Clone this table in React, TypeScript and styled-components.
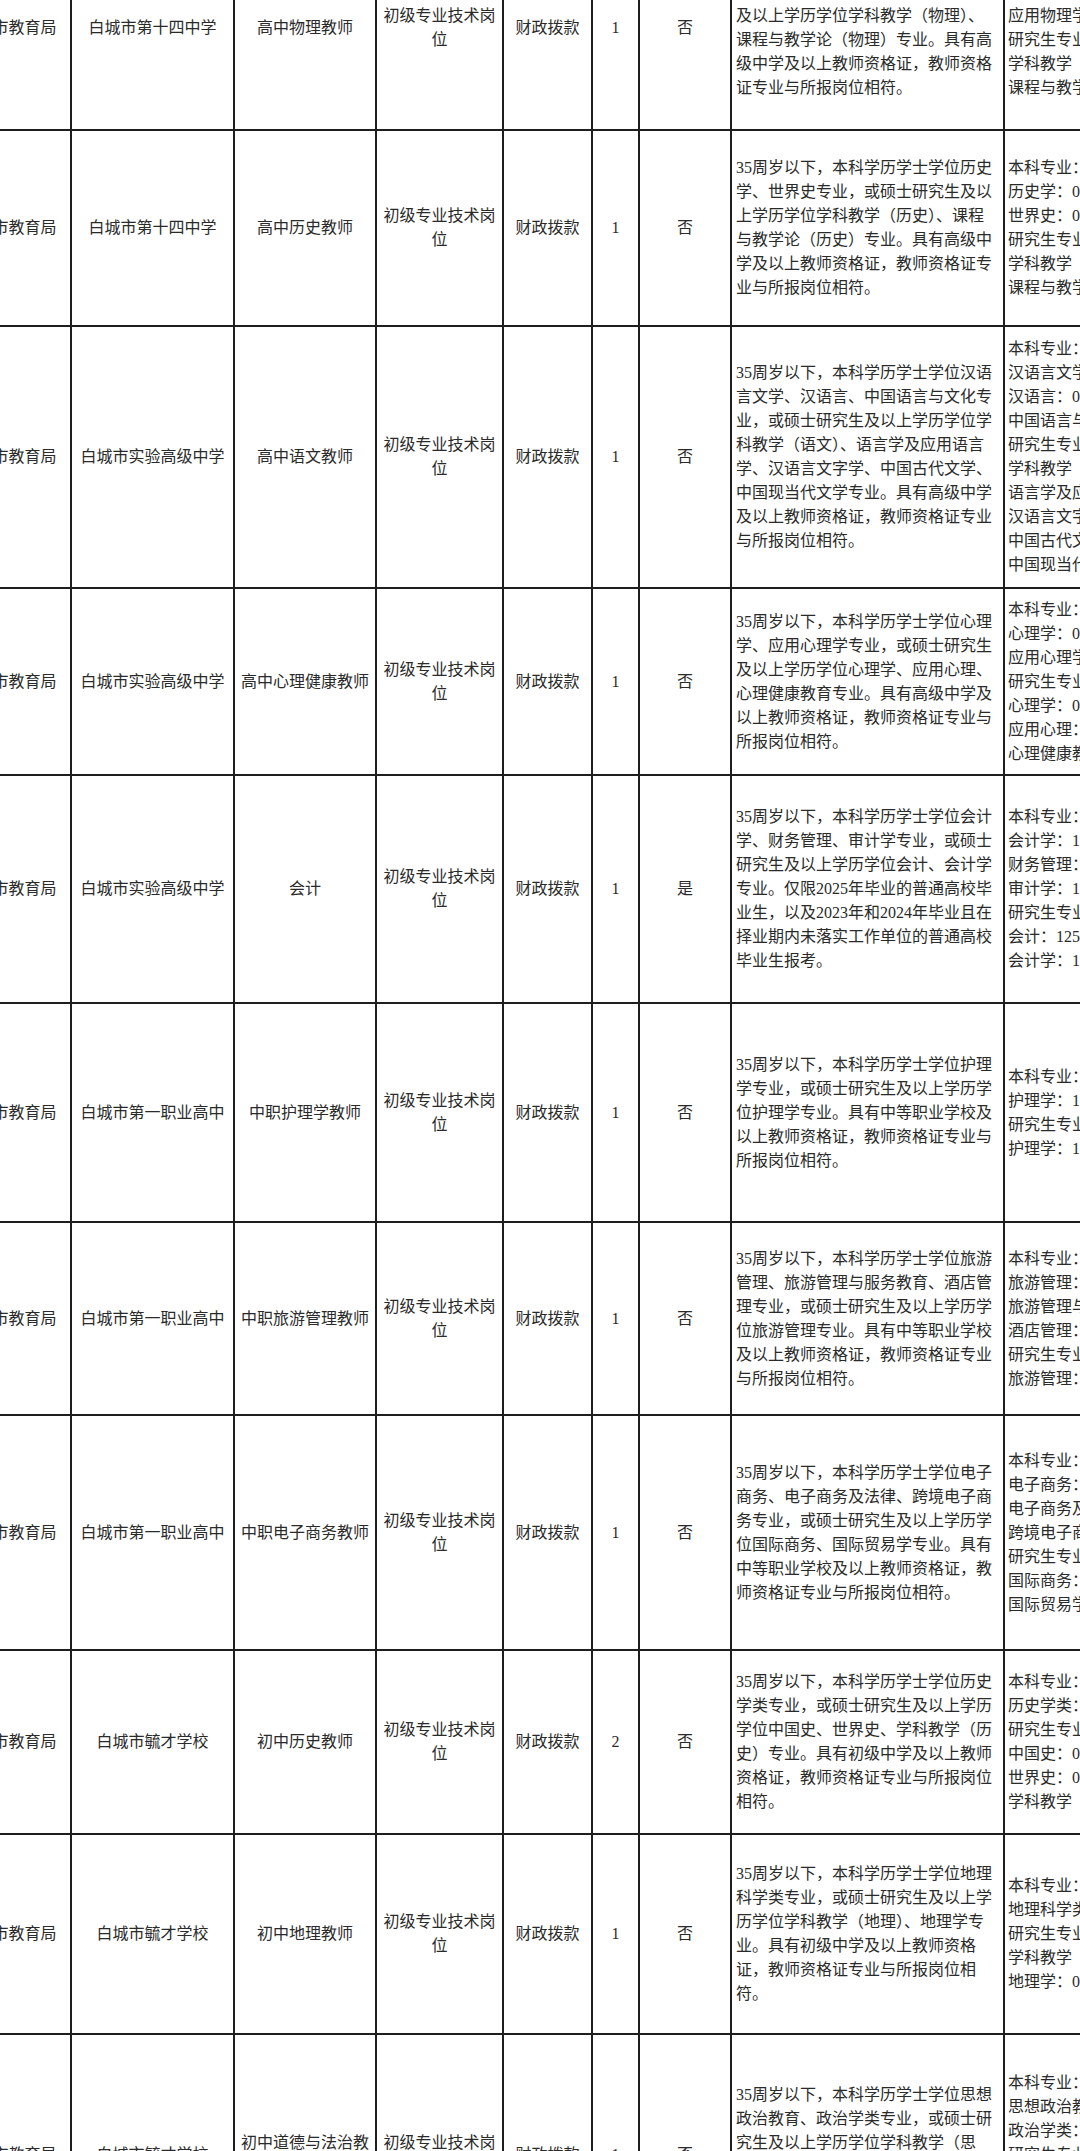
import React from "react";
import styled, { createGlobalStyle } from "styled-components";

const Global = createGlobalStyle`
  html, body {
    margin: 0;
    padding: 0;
    background: #ffffff;
  }
  body {
    overflow: hidden;
  }
`;

const LINE = "#1e1e1e";
const COLS = "125px 163px 142px 127px 89px 47px 92px 273px 300px";

const Page = styled.div`
  width: 1080px;
  height: 2151px;
  overflow: hidden;
  background: #fff;
`;

const Sheet = styled.div`
  margin: -74px 0 0 -53px;
  width: 1360px;
  font-family: "Liberation Serif", "Noto Sans CJK SC", serif;
  font-size: 16px;
  line-height: 24px;
  color: #2a2a2a;
`;

const Row = styled.div<{ $h: number }>`
  display: grid;
  grid-template-columns: ${COLS};
  height: ${(p) => p.$h}px;
  box-sizing: border-box;
  border-bottom: 2px solid ${LINE};
`;

const Cell = styled.div`
  box-sizing: border-box;
  border-right: 2px solid ${LINE};
  display: flex;
  align-items: center;
  justify-content: center;
  text-align: center;
  padding: 0 3px;
  overflow: hidden;
`;

const ReqCell = styled(Cell)`
  justify-content: flex-start;
  text-align: left;
  padding: 0 6px 0 4px;
`;

const MajorCell = styled(Cell)`
  justify-content: flex-start;
  text-align: left;
  padding: 0 0 0 3px;
  border-right: none;
`;

const Lines = styled.div`
  display: flex;
  flex-direction: column;
  white-space: nowrap;
`;

type Post = {
  h: number;
  unit: string;
  post: string;
  n: string;
  limit: string;
  req: string;
  majors: string[];
};

const rows: Post[] = [
  {
    h: 205,
    unit: "白城市第十四中学",
    post: "高中物理教师",
    n: "1",
    limit: "否",
    req: "35周岁以下，本科学历学士学位物理学、应用物理学专业，或硕士研究生及以上学历学位学科教学（物理）、课程与教学论（物理）专业。具有高级中学及以上教师资格证，教师资格证专业与所报岗位相符。",
    majors: ["本科专业：", "物理学：070201", "应用物理学：070202", "研究生专业：", "学科教学（物理）：045105", "课程与教学论（物理）：040102"],
  },
  {
    h: 196,
    unit: "白城市第十四中学",
    post: "高中历史教师",
    n: "1",
    limit: "否",
    req: "35周岁以下，本科学历学士学位历史学、世界史专业，或硕士研究生及以上学历学位学科教学（历史）、课程与教学论（历史）专业。具有高级中学及以上教师资格证，教师资格证专业与所报岗位相符。",
    majors: ["本科专业：", "历史学：060101", "世界史：060103", "研究生专业：", "学科教学（历史）：045109", "课程与教学论（历史）：040102"],
  },
  {
    h: 262,
    unit: "白城市实验高级中学",
    post: "高中语文教师",
    n: "1",
    limit: "否",
    req: "35周岁以下，本科学历学士学位汉语言文学、汉语言、中国语言与文化专业，或硕士研究生及以上学历学位学科教学（语文）、语言学及应用语言学、汉语言文字学、中国古代文学、中国现当代文学专业。具有高级中学及以上教师资格证，教师资格证专业与所报岗位相符。",
    majors: ["本科专业：", "汉语言文学：050101", "汉语言：050102", "中国语言与文化：050108T", "研究生专业：", "学科教学（语文）：045103", "语言学及应用语言学：050102", "汉语言文字学：050103", "中国古代文学：050105", "中国现当代文学：050106"],
  },
  {
    h: 187,
    unit: "白城市实验高级中学",
    post: "高中心理健康教师",
    n: "1",
    limit: "否",
    req: "35周岁以下，本科学历学士学位心理学、应用心理学专业，或硕士研究生及以上学历学位心理学、应用心理、心理健康教育专业。具有高级中学及以上教师资格证，教师资格证专业与所报岗位相符。",
    majors: ["本科专业：", "心理学：071101", "应用心理学：071102", "研究生专业：", "心理学：0402", "应用心理：0454", "心理健康教育：045116"],
  },
  {
    h: 228,
    unit: "白城市实验高级中学",
    post: "会计",
    n: "1",
    limit: "是",
    req: "35周岁以下，本科学历学士学位会计学、财务管理、审计学专业，或硕士研究生及以上学历学位会计、会计学专业。仅限2025年毕业的普通高校毕业生，以及2023年和2024年毕业且在择业期内未落实工作单位的普通高校毕业生报考。",
    majors: ["本科专业：", "会计学：120203K", "财务管理：120204", "审计学：120207", "研究生专业：", "会计：1253", "会计学：120201"],
  },
  {
    h: 219,
    unit: "白城市第一职业高中",
    post: "中职护理学教师",
    n: "1",
    limit: "否",
    req: "35周岁以下，本科学历学士学位护理学专业，或硕士研究生及以上学历学位护理学专业。具有中等职业学校及以上教师资格证，教师资格证专业与所报岗位相符。",
    majors: ["本科专业：", "护理学：101101", "研究生专业：", "护理学：1011"],
  },
  {
    h: 193,
    unit: "白城市第一职业高中",
    post: "中职旅游管理教师",
    n: "1",
    limit: "否",
    req: "35周岁以下，本科学历学士学位旅游管理、旅游管理与服务教育、酒店管理专业，或硕士研究生及以上学历学位旅游管理专业。具有中等职业学校及以上教师资格证，教师资格证专业与所报岗位相符。",
    majors: ["本科专业：", "旅游管理：120901K", "旅游管理与服务教育：120903", "酒店管理：120902", "研究生专业：", "旅游管理：1254"],
  },
  {
    h: 235,
    unit: "白城市第一职业高中",
    post: "中职电子商务教师",
    n: "1",
    limit: "否",
    req: "35周岁以下，本科学历学士学位电子商务、电子商务及法律、跨境电子商务专业，或硕士研究生及以上学历学位国际商务、国际贸易学专业。具有中等职业学校及以上教师资格证，教师资格证专业与所报岗位相符。",
    majors: ["本科专业：", "电子商务：120801", "电子商务及法律：120802", "跨境电子商务：120803T", "研究生专业：", "国际商务：0254", "国际贸易学：020206"],
  },
  {
    h: 184,
    unit: "白城市毓才学校",
    post: "初中历史教师",
    n: "2",
    limit: "否",
    req: "35周岁以下，本科学历学士学位历史学类专业，或硕士研究生及以上学历学位中国史、世界史、学科教学（历史）专业。具有初级中学及以上教师资格证，教师资格证专业与所报岗位相符。",
    majors: ["本科专业：", "历史学类：0601", "研究生专业：", "中国史：0602", "世界史：0603", "学科教学（历史）：045109"],
  },
  {
    h: 200,
    unit: "白城市毓才学校",
    post: "初中地理教师",
    n: "1",
    limit: "否",
    req: "35周岁以下，本科学历学士学位地理科学类专业，或硕士研究生及以上学历学位学科教学（地理）、地理学专业。具有初级中学及以上教师资格证，教师资格证专业与所报岗位相符。",
    majors: ["本科专业：", "地理科学类：0705", "研究生专业：", "学科教学（地理）：045110", "地理学：0705"],
  },
  {
    h: 242,
    unit: "白城市毓才学校",
    post: "初中道德与法治教师",
    n: "1",
    limit: "否",
    req: "35周岁以下，本科学历学士学位思想政治教育、政治学类专业，或硕士研究生及以上学历学位学科教学（思政）、思想政治教育、政治学专业。具有初级中学及以上教师资格证，教师资格证专业与所报岗位相符。",
    majors: ["本科专业：", "思想政治教育：030503", "政治学类：0302", "研究生专业：", "学科教学（思政）：045102", "思想政治教育：030505", "政治学：0302"],
  },
];

export default function App() {
  return (
    <Page>
      <Global />
      <Sheet>
        {rows.map((r, i) => (
          <Row key={i} $h={r.h}>
            <Cell>白城市教育局</Cell>
            <Cell>{r.unit}</Cell>
            <Cell>{r.post}</Cell>
            <Cell>初级专业技术岗位</Cell>
            <Cell>财政拨款</Cell>
            <Cell>{r.n}</Cell>
            <Cell>{r.limit}</Cell>
            <ReqCell>
              <div>{r.req}</div>
            </ReqCell>
            <MajorCell>
              <Lines>
                {r.majors.map((m, j) => (
                  <span key={j}>{m}</span>
                ))}
              </Lines>
            </MajorCell>
          </Row>
        ))}
      </Sheet>
    </Page>
  );
}
